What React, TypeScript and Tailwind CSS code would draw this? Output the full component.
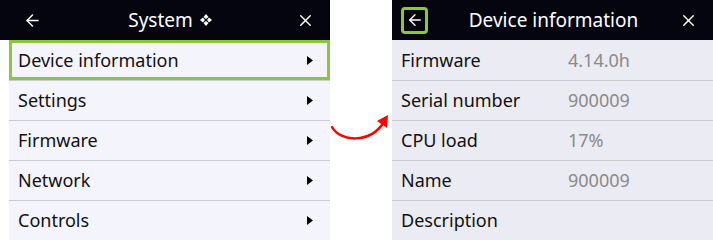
import { ArrowLeft, X } from "lucide-react";

const menu = ["Device information", "Settings", "Firmware", "Network", "Controls"];

const info = [
  { label: "Firmware", value: "4.14.0h" },
  { label: "Serial number", value: "900009" },
  { label: "CPU load", value: "17%" },
  { label: "Name", value: "900009" },
  { label: "Description", value: "" },
];

function Caret() {
  return (
    <svg width="6" height="9" viewBox="0 0 6 9" className="shrink-0">
      <path d="M0 0 L6 4.5 L0 9 Z" fill="#000" />
    </svg>
  );
}

function MoveIcon() {
  return (
    <svg width="12" height="12" viewBox="0 0 12 12" className="ml-[7px]">
      <path d="M6 0 L8.5 3 L6 5 L3.5 3 Z" fill="#fff" />
      <path d="M6 7 L8.5 9 L6 12 L3.5 9 Z" fill="#fff" />
      <path d="M0 6 L3 3.5 L5 6 L3 8.5 Z" fill="#fff" />
      <path d="M7 6 L9 3.5 L12 6 L9 8.5 Z" fill="#fff" />
    </svg>
  );
}

function CurvedArrow() {
  return (
    <svg width="62" height="40" viewBox="0 0 62 40">
      <path
        d="M2 17 C 10 32, 40 34, 54 12"
        fill="none"
        stroke="#ff0000"
        strokeWidth="2.5"
        strokeLinecap="round"
      />
      <path d="M58 5 L57 18 L47 11 Z" fill="#ff0000" />
    </svg>
  );
}

export default function App() {
  return (
    <div
      className="flex h-[240px] w-[713px] bg-white"
      style={{ fontFamily: '"Noto Sans", "Open Sans", sans-serif' }}
    >
      {/* left: system menu */}
      <div className="flex w-[330px] flex-col">
        <div className="flex h-[40px] items-center bg-[#05050f] pl-[23px] pr-[15px] text-white">
          <ArrowLeft size={19} strokeWidth={1.8} />
          <div className="flex flex-1 items-center justify-center pl-[2px] text-[19px]">
            System
            <MoveIcon />
          </div>
          <X size={19} strokeWidth={1.8} />
        </div>
        <div className="ml-[9px] flex flex-1 flex-col bg-[#f4f4fc] text-[18px] text-[#111]">
          {menu.map((item, i) => (
            <div
              key={item}
              className={
                i === 0
                  ? "flex h-[40px] items-center border-[3px] border-[#8cc63f] pl-[6px] pr-[14px]"
                  : "flex h-[40px] items-center border-t border-[#c9c9cf] pl-[9px] pr-[17px]"
              }
            >
              <span className="flex-1">{item}</span>
              <Caret />
            </div>
          ))}
        </div>
      </div>

      {/* transition arrow */}
      <div className="flex w-[62px] items-start pt-[110px]">
        <CurvedArrow />
      </div>

      {/* right: device information */}
      <div className="flex flex-1 flex-col">
        <div className="flex h-[40px] items-center bg-[#05050f] pl-[9px] pr-[15px] text-white">
          <div className="flex h-[27px] w-[27px] items-center justify-center rounded-[4px] border-[3px] border-[#8cc63f]">
            <ArrowLeft size={18} strokeWidth={1.8} />
          </div>
          <div className="flex-1 text-center text-[19px]">Device information</div>
          <X size={19} strokeWidth={1.8} />
        </div>
        <div className="flex flex-1 flex-col bg-[#ebebf3] text-[18px]">
          {info.map((row, i) => (
            <div
              key={row.label}
              className={`flex h-[40px] items-center pl-[9px] ${
                i === 0 ? "" : "border-t border-[#c9c9cf]"
              }`}
            >
              <span className="w-[167px] text-[#111]">{row.label}</span>
              <span className="text-[#8a8a8a]">{row.value}</span>
            </div>
          ))}
        </div>
      </div>
    </div>
  );
}
